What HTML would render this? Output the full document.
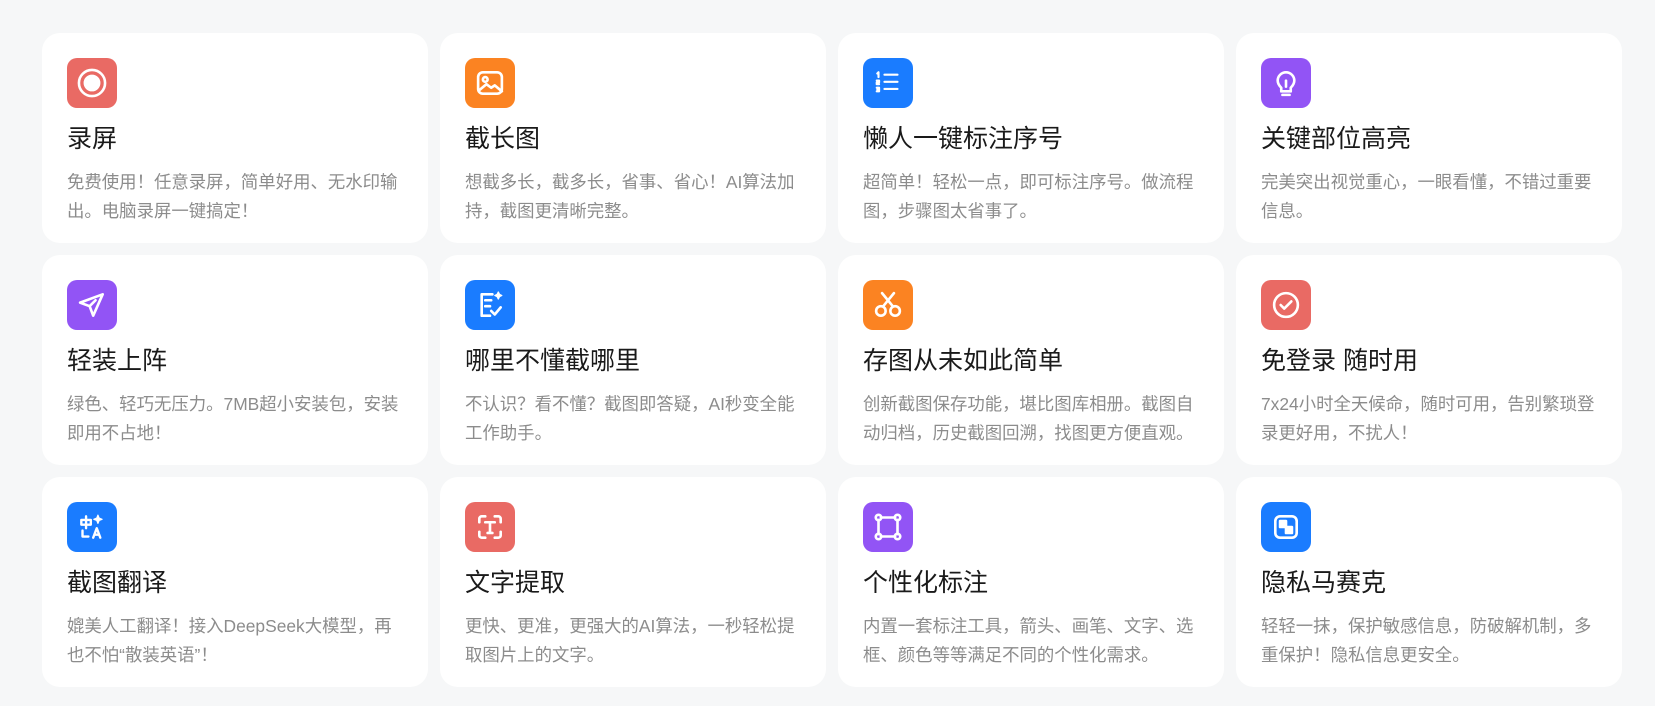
<!DOCTYPE html><html><head><meta charset="utf-8"><style>
body{margin:0;background:#f6f7f8;width:1655px;height:706px;overflow:hidden;font-family:"Liberation Sans","Noto Sans CJK SC",sans-serif}
.g{position:absolute;left:42px;top:33px;display:grid;grid-template-columns:repeat(4,386px);grid-auto-rows:210px;column-gap:12px;row-gap:12px}
.c{background:#fff;border-radius:18px;padding:25px 21px 0 25px;box-sizing:border-box}
.i{width:50px;height:50px;border-radius:10px;display:flex;align-items:center;justify-content:center}
.i svg{width:38px;height:38px;fill:none;stroke:#fff;stroke-width:2.2;stroke-linecap:round;stroke-linejoin:round}
h3{margin:15px 0 0;font-weight:400;font-size:25px;line-height:32px;color:#1a1a1a}
p{margin:13px 0 0;font-size:17.4px;line-height:28.5px;color:#8c8c8c}
.r{background:#e96a64}.o{background:#fb8322}.b{background:#1a7cff}.p{background:#9254f5}
</style></head><body><div class="g">
<div class="c"><div class="i r"><svg viewBox="0 0 32 32"><circle cx="16" cy="16" r="11"/><circle cx="16" cy="16" r="6" fill="#fff"/></svg></div><h3>录屏</h3><p>免费使用！任意录屏，简单好用、无水印输出。电脑录屏一键搞定！</p></div>
<div class="c"><div class="i o"><svg viewBox="0 0 32 32"><rect x="6" y="7" width="20" height="18" rx="4"/><circle cx="12" cy="13" r="2"/><path d="M7 22l6-5 4 3 3-2 6 5"/></svg></div><h3>截长图</h3><p>想截多长，截多长，省事、省心！AI算法加持，截图更清晰完整。</p></div>
<div class="c"><div class="i b"><svg viewBox="0 0 32 32"><path d="M13 9h11M13 15h11M13 21h11M7 8l1-1v4M6.5 14h2v1.5h-2V17h2M6.5 20h2v3h-2M7 21.5h1.5" stroke-width="1.8"/></svg></div><h3>懒人一键标注序号</h3><p>超简单！轻松一点，即可标注序号。做流程图，步骤图太省事了。</p></div>
<div class="c"><div class="i p"><svg viewBox="0 0 32 32"><path d="M12 20c-2-2-3-4-3-6a7 7 0 0114 0c0 2-1 4-3 6v3h-8z"/><path d="M13 26h6M16 14v5"/></svg></div><h3>关键部位高亮</h3><p>完美突出视觉重心，一眼看懂，不错过重要信息。</p></div>
<div class="c"><div class="i p"><svg viewBox="0 0 32 32"><path d="M25 7L6 14l8 3 3 8zM14 17l5-5"/></svg></div><h3>轻装上阵</h3><p>绿色、轻巧无压力。7MB超小安装包，安装即用不占地！</p></div>
<div class="c"><div class="i b"><svg viewBox="0 0 32 32"><path d="M18 7H9v18h7M12 12h5M12 17h4"/><path d="M17 21l3 3 5-6"/><path d="M23 5l1 2 2 1-2 1-1 2-1-2-2-1 2-1z" fill="#fff" stroke-width="1"/></svg></div><h3>哪里不懂截哪里</h3><p>不认识？看不懂？截图即答疑，AI秒变全能工作助手。</p></div>
<div class="c"><div class="i o"><svg viewBox="0 0 32 32"><circle cx="10" cy="21" r="4"/><circle cx="22" cy="21" r="4"/><path d="M12 17L21 6M20 17L11 6"/></svg></div><h3>存图从未如此简单</h3><p>创新截图保存功能，堪比图库相册。截图自动归档，历史截图回溯，找图更方便直观。</p></div>
<div class="c"><div class="i r"><svg viewBox="0 0 32 32"><circle cx="16" cy="16" r="10"/><path d="M11.5 16l3 3 6-6"/></svg></div><h3>免登录 随时用</h3><p>7x24小时全天候命，随时可用，告别繁琐登录更好用，不扰人！</p></div>
<div class="c"><div class="i b"><svg viewBox="0 0 32 32"><path d="M7 10h8v4H7zM11 7v10M8 19v5h5M17 25l3-8 3 8M18 22.5h4" stroke-width="2"/><path d="M21 6l1 2.5 2.5 1-2.5 1-1 2.5-1-2.5-2.5-1 2.5-1z" fill="#fff" stroke-width="1"/></svg></div><h3>截图翻译</h3><p>媲美人工翻译！接入DeepSeek大模型，再也不怕“散装英语”！</p></div>
<div class="c"><div class="i r"><svg viewBox="0 0 32 32"><path d="M7 12V9a2 2 0 012-2h3M20 7h3a2 2 0 012 2v3M25 20v3a2 2 0 01-2 2h-3M12 25H9a2 2 0 01-2-2v-3M12 12h8M16 12v9M14 21h4"/></svg></div><h3>文字提取</h3><p>更快、更准，更强大的AI算法，一秒轻松提取图片上的文字。</p></div>
<div class="c"><div class="i p"><svg viewBox="0 0 32 32"><path d="M10 8h12M10 24h12M8 10v12M24 10v12"/><circle cx="8" cy="8" r="2.3"/><circle cx="24" cy="8" r="2.3"/><circle cx="8" cy="24" r="2.3"/><circle cx="24" cy="24" r="2.3"/></svg></div><h3>个性化标注</h3><p>内置一套标注工具，箭头、画笔、文字、选框、颜色等等满足不同的个性化需求。</p></div>
<div class="c"><div class="i b"><svg viewBox="0 0 32 32"><rect x="7" y="7" width="18" height="18" rx="4"/><rect x="11" y="11" width="5" height="5" fill="#fff"/><rect x="16" y="16" width="5" height="5" fill="#fff"/></svg></div><h3>隐私马赛克</h3><p>轻轻一抹，保护敏感信息，防破解机制，多重保护！隐私信息更安全。</p></div>
</div></body></html>
